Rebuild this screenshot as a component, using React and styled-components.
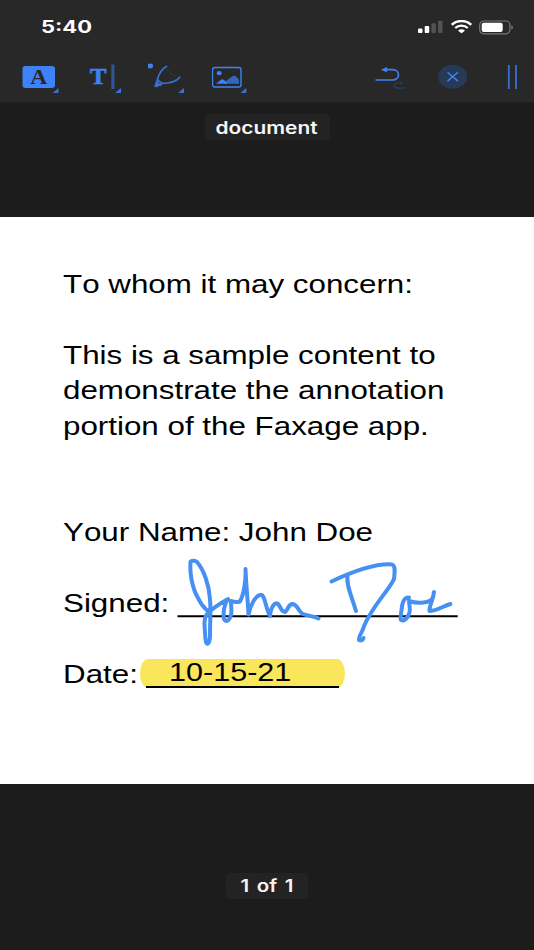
import React from "react";
import styled, { createGlobalStyle } from "styled-components";

const Global = createGlobalStyle`
  * { box-sizing: border-box; }
  body { margin: 0; background: #1c1c1c; }
  svg { display: block; }
`;

const Screen = styled.div`
  width: 534px;
  height: 950px;
  display: flex;
  flex-direction: column;
  background: #1c1c1c;
  overflow: hidden;
`;

const Header = styled.header`
  height: 103px;
  flex: none;
  background: #282828;
  border-bottom: 1px solid #202020;
`;

const StatusBar = styled.div`
  height: 52px;
  padding: 0 20px 0 41px;
  display: flex;
  align-items: center;
  justify-content: space-between;
`;

const Wide = styled.span`
  display: inline-block;
  white-space: pre;
  transform: scaleX(${(p) => p.$x || 1.205});
  transform-origin: ${(p) => p.$origin || "left"} center;
`;

const Clock = styled.time`
  font: 700 17px/20px Inter, sans-serif;
  color: #fff;
  padding-top: 2px;
`;

const StatusIcons = styled.div`
  display: flex;
  align-items: center;
  gap: 7.5px;
  padding-top: 2px;
`;

const Toolbar = styled.nav`
  height: 50px;
  padding: 0 14px 0 22px;
  display: flex;
  justify-content: space-between;
`;

const ToolGroup = styled.div`
  display: flex;
  gap: ${(p) => p.$gap}px;
`;

const Tool = styled.button`
  width: ${(p) => p.$w}px;
  height: 50px;
  padding: 0;
  border: 0;
  background: none;
`;

const TopStrip = styled.div`
  height: 114px;
  flex: none;
  display: flex;
  justify-content: center;
  align-items: flex-start;
  padding-top: 11px;
`;

const BottomStrip = styled(TopStrip)`
  height: 167px;
  padding-top: 89px;
`;

const Pill = styled.div`
  width: ${(p) => p.$w}px;
  height: 26px;
  border-radius: 4px;
  background: #232323;
  color: #f6f6f6;
  text-align: center;
  font: 600 17px/${(p) => p.$lh || 27}px Inter, sans-serif;
  word-spacing: 2px;
`;

const Page = styled.main`
  height: 567px;
  flex: none;
  background: #fff;
  color: #000;
  padding: 50px 0 0 63px;
  font: 26px/35.45px "Liberation Sans", Arial, sans-serif;
  font-kerning: none;
`;

const Line = styled.p`
  margin: 0 0 ${(p) => p.$after || 0}px;
  height: 35.45px;
  display: flex;
`;

const Label = styled.span`
  width: ${(p) => p.$w}px;
  flex: none;
`;

const SignatureField = styled.span`
  width: 284px;
  height: 96px;
  margin-top: -30px;
  flex: none;
`;

const DateField = styled.span`
  width: 205px;
  height: 29px;
  margin-top: 2px;
  padding: 0 6px;
  border-radius: 8px / 14.5px;
  background: #fae65b;
  flex: none;
`;

const DateLine = styled.span`
  display: block;
  height: 29px;
  border-bottom: 2px solid #000;
  padding-left: 23px;
  line-height: 27px;
`;

const blue = "#3d82f6";
const Corner = ({ x }) => <path d={`M${x} 41v-5l-6 5z`} fill="#3672d2" stroke="none" />;

export default function App() {
  return (
    <Screen>
      <Global />
      <Header>
        <StatusBar>
          <Clock><Wide $x={1.29}>5:40</Wide></Clock>
          <StatusIcons>
            <svg width="25" height="14" viewBox="0 0 25 14">
              <rect x="0" y="8.5" width="4.5" height="4.5" rx="1" fill="#fff" />
              <rect x="6.7" y="6" width="4.5" height="7" rx="1" fill="#fff" />
              <rect x="13.4" y="3.3" width="4.5" height="9.7" rx="1" fill="#535353" />
              <rect x="20" y="0.8" width="4.5" height="12.2" rx="1" fill="#535353" />
            </svg>
            <svg width="21" height="14" viewBox="0 0 21 14" fill="none" stroke="#fff">
              <path d="M.8 4.8C6-.2 15-.2 20.2 4.8" strokeWidth="2.5" />
              <path d="M4.2 8c3.5-3.2 9.1-3.2 12.6 0" strokeWidth="2.3" />
              <path d="M7 10.7c2-1.8 5-1.8 7 0L10.5 13.3z" fill="#fff" stroke="none" />
            </svg>
            <svg width="35" height="15" viewBox="0 0 35 15">
              <rect x=".7" y="1" width="30.2" height="12.8" rx="4" fill="none" stroke="#777" strokeWidth="1.2" />
              <rect x="2.7" y="2.8" width="21" height="9.2" rx="2" fill="#fff" />
              <path d="M32.3 5.2c2.2.7 2.2 3.7 0 4.4z" fill="#777" />
            </svg>
          </StatusIcons>
        </StatusBar>
        <Toolbar>
          <ToolGroup $gap={26}>
            <Tool $w={38} aria-label="Highlight">
              <svg width="38" height="50" viewBox="0 0 38 50">
                <rect x=".5" y="14" width="32.5" height="22" rx="3" fill={blue} />
                <text x="16.7" y="31.8" textAnchor="middle" fontFamily="Liberation Serif, serif" fontWeight="700" fontSize="21.5" fill="#282828" textLength="17" lengthAdjust="spacingAndGlyphs">A</text>
                <Corner x={36.5} />
              </svg>
            </Tool>
            <Tool $w={36} aria-label="Text">
              <svg width="36" height="50" viewBox="0 0 36 50">
                <text x="4" y="31.8" fontFamily="Liberation Serif, serif" fontWeight="700" fontSize="23.5" fill={blue} stroke={blue} strokeWidth=".6" textLength="16.5" lengthAdjust="spacingAndGlyphs">T</text>
                <rect x="25.3" y="12.5" width="3.2" height="24.5" fill="#2f5594" />
                <Corner x={35} />
              </svg>
            </Tool>
            <Tool $w={38} aria-label="Draw">
              <svg width="38" height="50" viewBox="0 0 38 50" fill="none" stroke="#3672d2" strokeWidth="1.7" strokeLinecap="round">
                <ellipse cx="2.2" cy="14" rx="2.8" ry="2.4" fill={blue} stroke="none" />
                <path d="M18.6 14.3C12.5 18 10.5 22 9.4 28M13.8 31.5C22 31.3 28 30 31.7 25.2" />
                <path d="M18.6 18 28 25" stroke="#293b58" strokeWidth="1" />
                <path d="m9.4 28 4.6 3.3-1.5 1.8-4-2.8z" />
                <path d="m8.3 31.2 2.8 1.9-2.7 1.5-1.3-.8z" fill={blue} />
                <Corner x={36} />
              </svg>
            </Tool>
            <Tool $w={36} aria-label="Insert picture">
              <svg width="36" height="50" viewBox="0 0 36 50">
                <rect x=".5" y="15.5" width="28.5" height="19.5" rx="2.3" fill="none" stroke={blue} strokeWidth="1.4" />
                <ellipse cx="7.2" cy="21.2" rx="2.5" ry="2.1" fill={blue} />
                <path d="M12 31.8v-1.3l8-6q2-1.5 4 0l3 3v4.3z" fill="#3166b9" />
                <path d="M4 31.8l5-4q1.3-1 2.7 0l4.3 4z" fill={blue} />
                <Corner x={34.3} />
              </svg>
            </Tool>
          </ToolGroup>
          <ToolGroup $gap={31}>
            <Tool $w={32} aria-label="Undo">
              <svg width="32" height="50" viewBox="0 0 32 50" fill="none">
                <path d="M.5 28h17c8 0 8-10.3 0-10.3H10" stroke={blue} strokeWidth="1.7" />
                <path d="M6 17.7l6-2.8v5.6z" fill={blue} />
                <path d="M30.5 36.2h-8c-4 0-4-5.2 0-5.2h3.5" stroke="#293e60" strokeWidth="1.2" />
                <path d="m28.5 31-3-1.8v3.6z" fill="#293e60" />
              </svg>
            </Tool>
            <Tool $w={30} aria-label="Close">
              <svg width="30" height="50" viewBox="0 0 30 50">
                <ellipse cx="14.7" cy="24.7" rx="14.6" ry="12" fill="#263a58" />
                <path d="m9.5 20.3 10.4 8.8m0-8.8L9.5 29.1" stroke={blue} strokeWidth="1.5" />
              </svg>
            </Tool>
            <Tool $w={21} aria-label="Drag handle">
              <svg width="21" height="50" viewBox="0 0 21 50">
                <path d="M9.8 13v24M17 13v24" stroke="#3672d2" strokeWidth="1.8" />
              </svg>
            </Tool>
          </ToolGroup>
        </Toolbar>
      </Header>
      <TopStrip>
        <Pill $w={125} $lh={28}><Wide $x={1.23} $origin="center">document</Wide></Pill>
      </TopStrip>
      <Page>
        <Line $after={35.4}><Wide>To whom it may concern:</Wide></Line>
        <Line><Wide>This is a sample content to</Wide></Line>
        <Line><Wide>demonstrate the annotation</Wide></Line>
        <Line $after={70.9}><Wide>portion of the Faxage app.</Wide></Line>
        <Line $after={35.4}><Wide>Your Name: John Doe</Wide></Line>
        <Line $after={35.4}>
          <Label $w={112}><Wide>Signed:</Wide></Label>
          <SignatureField>
            <svg width="284" height="96" viewBox="175 556 284 96" fill="none" strokeLinecap="round" strokeLinejoin="round">
              <path d="M177.5 616.3H457.7" stroke="#000" strokeWidth="2" strokeLinecap="butt" />
              <g stroke="#4690f3" strokeWidth="4">
                <path d="M210 612C203 609 199 600 195 592C190 579 190 570 190.500 562C191 560.500 195 560 197 562C204 570 209 585 210 599C211 609 210 620 210 637C209.500 645 206 646 205.500 639C204.500 626 203 618 208 613C213 608 221 603 228 599C224 604 223 613 224 619C225 622 229 622 231 615C232 610 231 606 231 601C234 602 237 602.500 240 601.500C244 594 246 580 245.500 569C246 584 248 603 248.500 614.500C251 603 256 596 260 595C265 593 265 607 270 616C271 606 275 602 278 604C281 607 281 612 285 612C288 610 288 605 292 604C298 604 298 612 303 614C308 616 314 616 318.500 618.500" />
                <path d="M331.500 581.500C354 571 375 563 392 564.500C396 566 394.500 573 394 579C390 589 369 610 363 629C361 634 358 638 359 640C361 641 363 640 363.500 638M347.500 575C346 586 352 597 356 611" />
                <path d="M409 597.500C401 597 402 610 400.500 618C400.500 623 407 620 409 614C411 610 409 604 409 601C418 604 427 603 431 600C435 597 433 593 434 592C433 600 429 607 429.500 611C437 611 443 606 450.500 604" />
              </g>
            </svg>
          </SignatureField>
        </Line>
        <Line>
          <Label $w={77}><Wide>Date:</Wide></Label>
          <DateField><DateLine><Wide $x={1.175}>10-15-21</Wide></DateLine></DateField>
        </Line>
      </Page>
      <BottomStrip>
        <Pill $w={82}><Wide $origin="center">1 of 1</Wide></Pill>
      </BottomStrip>
    </Screen>
  );
}
